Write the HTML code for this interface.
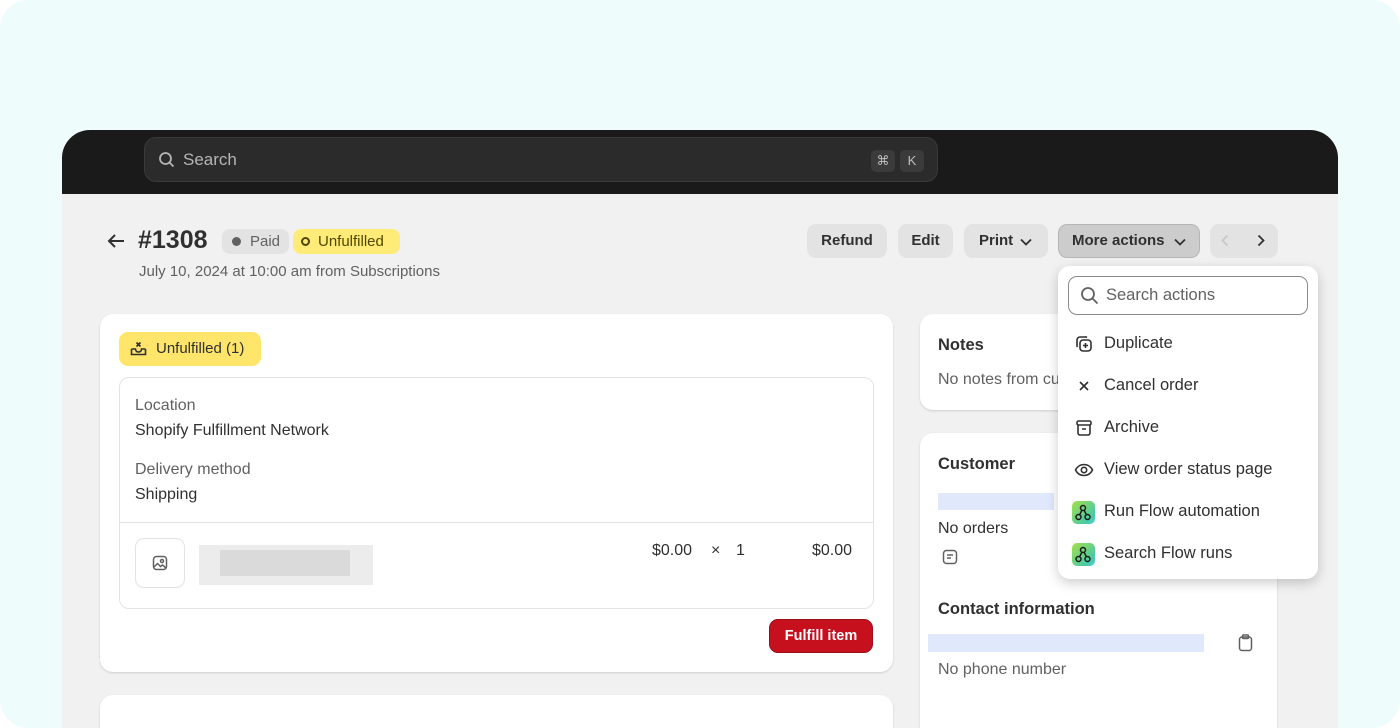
<!DOCTYPE html>
<html><head><meta charset="utf-8"><style>
*{box-sizing:border-box;margin:0;padding:0}
html,body{width:1400px;height:728px;overflow:hidden}
body{background:#fff;font-family:"Liberation Sans",sans-serif;color:#303030;position:relative}
.bg{left:0;top:0;width:1400px;height:728px;background:#eefcfb;border-radius:28px}
.a{position:absolute}
.frame{left:62px;top:130px;width:1276px;height:598px;background:#f1f1f1;border-radius:28px 28px 0 0;overflow:hidden}
.top{left:0;top:0;width:1276px;height:64px;background:#1a1a1a}
.search{left:82px;top:7px;width:794px;height:45px;background:#2b2b2b;border:1px solid #3a3a3a;border-radius:12px;color:#b5b5b5;font-size:17px}
.key{top:12px;width:24px;height:22px;background:#3b3b3b;border-radius:5px;color:#bdbdbd;font-size:13px;text-align:center;line-height:22px}
.btn{top:94px;height:34px;background:#e3e3e3;border-radius:9px;font-size:15px;font-weight:bold;color:#303030;line-height:34px;text-align:center}
.card{background:#fff;border-radius:13px;box-shadow:0 1px 2px rgba(0,0,0,.15)}
.t15{font-size:16px}
.lbl{color:#616161;font-size:16px}
.bold{font-weight:bold;font-size:16.5px}
.menu{left:996px;top:136px;width:260px;height:313px;background:#fff;border-radius:12px;box-shadow:0 4px 12px rgba(0,0,0,.2)}
.mi{left:46px;font-size:16.5px;color:#303030}
.ic{left:16px;width:20px;height:20px}
.flow{left:14px;width:23px;height:23px;border-radius:5px;background:linear-gradient(135deg,#a5e04a,#44c9a8 80%,#5bd6e8)}
.blur{background:#dfe9fb}
</style></head><body>
<div class="a bg"></div>
<div class="a frame">
 <div class="a top">
  <div class="a search">
   <svg class="a" style="left:13px;top:13px" width="18" height="18" viewBox="0 0 18 18" fill="none" stroke="#b5b5b5" stroke-width="1.8"><circle cx="7.5" cy="7.5" r="5.5"/><path d="M11.5 11.5l4 4"/></svg>
   <div class="a" style="left:38px;top:12px">Search</div>
   <div class="a key" style="left:726px">⌘</div><div class="a key" style="left:755px">K</div>
  </div>
 </div>
 <svg class="a" style="left:44px;top:102px" width="20" height="18" viewBox="0 0 20 18" fill="none" stroke="#303030" stroke-width="2"><path d="M18 9H3M9 3L3 9l6 6"/></svg>
 <div class="a" style="left:76px;top:96px;font-size:25px;font-weight:bold">#1308</div>
 <div class="a" style="left:160px;top:99px;width:67px;height:25px;background:#e3e3e3;border-radius:8px;font-size:15px;color:#616161;line-height:25px;padding-left:28px">Paid</div>
 <div class="a" style="left:170px;top:107px;width:9px;height:9px;border-radius:50%;background:#616161"></div>
 <div class="a" style="left:231px;top:99px;width:107px;height:25px;background:#ffeb78;border-radius:8px;font-size:15px;color:#4f4700;line-height:25px;padding-left:25px">Unfulfilled</div>
 <div class="a" style="left:239px;top:107px;width:9px;height:9px;border-radius:50%;border:2px solid #4f4700"></div>
 <div class="a" style="left:77px;top:133px;font-size:15px;color:#616161">July 10, 2024 at 10:00 am from Subscriptions</div>
 <div class="a btn" style="left:745px;width:80px">Refund</div>
 <div class="a btn" style="left:836px;width:55px">Edit</div>
 <div class="a btn" style="left:902px;width:84px;text-align:left;padding-left:15px">Print</div>
 <svg class="a" style="left:958px;top:108px" width="12" height="8" viewBox="0 0 12 8" fill="none" stroke="#303030" stroke-width="1.8"><path d="M1 1.5l5 5 5-5"/></svg>
 <div class="a btn" style="left:996px;width:142px;background:#cccccc;border:1px solid #b5b5b5;text-align:left;padding-left:13px;line-height:32px">More actions</div>
 <svg class="a" style="left:1112px;top:108px" width="12" height="8" viewBox="0 0 12 8" fill="none" stroke="#303030" stroke-width="1.8"><path d="M1 1.5l5 5 5-5"/></svg>
 <div class="a btn" style="left:1148px;width:68px"></div>
 <svg class="a" style="left:1159px;top:104px" width="8" height="13" viewBox="0 0 8 13" fill="none" stroke="#c8c8c8" stroke-width="1.8"><path d="M6.5 1.5l-5 5 5 5"/></svg>
 <svg class="a" style="left:1195px;top:104px" width="8" height="13" viewBox="0 0 8 13" fill="none" stroke="#303030" stroke-width="1.8"><path d="M1.5 1.5l5 5-5 5"/></svg>

 <div class="a card" style="left:38px;top:184px;width:793px;height:358px">
  <div class="a" style="left:19px;top:18px;width:142px;height:34px;background:#ffe56a;border-radius:9px;font-size:15px;color:#303030;line-height:34px;padding-left:37px">Unfulfilled (1)</div>
  <svg class="a" style="left:30px;top:27px" width="17" height="16" viewBox="0 0 17 16" fill="none" stroke="#303030" stroke-width="1.6"><path d="M1.5 8v5.5h14V8M1.5 8h4c0 2 1.3 3 3 3s3-1 3-3h4M6.5 1.5l4 4M10.5 1.5l-4 4"/></svg>
  <div class="a" style="left:19px;top:63px;width:755px;height:232px;border:1px solid #e3e3e3;border-radius:10px">
   <div class="a lbl" style="left:15px;top:19px">Location</div>
   <div class="a t15" style="left:15px;top:44px">Shopify Fulfillment Network</div>
   <div class="a lbl" style="left:15px;top:83px">Delivery method</div>
   <div class="a t15" style="left:15px;top:108px">Shipping</div>
   <div class="a" style="left:0;top:144px;width:753px;height:1px;background:#e3e3e3"></div>
   <div class="a" style="left:15px;top:160px;width:50px;height:50px;border:1px solid #e3e3e3;border-radius:9px"></div>
   <svg class="a" style="left:32px;top:177px" width="16" height="16" viewBox="0 0 16 16" fill="none" stroke="#616161" stroke-width="1.5"><rect x="1.5" y="1.5" width="13" height="13" rx="3"/><circle cx="10" cy="6" r="1.5"/><path d="M2 12l3.5-3.5 3 3 2-1.5 3.5 3"/></svg>
   <div class="a" style="left:79px;top:167px;width:174px;height:40px;background:#ececec"></div>
   <div class="a" style="left:100px;top:172px;width:130px;height:26px;background:#dadada"></div>
   <div class="a t15" style="left:532px;top:164px">$0.00</div>
   <div class="a t15" style="left:591px;top:164px">×</div>
   <div class="a t15" style="left:616px;top:164px">1</div>
   <div class="a t15" style="left:692px;top:164px">$0.00</div>
  </div>
  <div class="a" style="left:669px;top:305px;width:104px;height:34px;background:#c7101d;border:1px solid #9e0d18;border-radius:9px;color:#fff;font-weight:bold;font-size:14.5px;line-height:32px;text-align:center">Fulfill item</div>
 </div>
 <div class="a card" style="left:38px;top:565px;width:793px;height:33px;border-radius:13px 13px 0 0"></div>

 <div class="a card" style="left:858px;top:184px;width:357px;height:96px">
  <div class="a bold" style="left:18px;top:22px">Notes</div>
  <div class="a lbl" style="left:18px;top:57px">No notes from customer</div>
 </div>
 <div class="a card" style="left:858px;top:303px;width:357px;height:295px;border-radius:13px 13px 0 0">
  <div class="a bold" style="left:18px;top:22px">Customer</div>
  <div class="a blur" style="left:18px;top:60px;width:116px;height:17px"></div>
  <div class="a lbl" style="left:18px;top:87px;color:#303030">No orders</div>
  <svg class="a" style="left:22px;top:116px" width="16" height="17" viewBox="0 0 16 17" fill="none" stroke="#616161" stroke-width="1.5"><rect x="1.5" y="1.5" width="13" height="13" rx="3"/><path d="M5 6h6M5 9h4"/></svg>
  <div class="a bold" style="left:18px;top:167px">Contact information</div>
  <div class="a blur" style="left:8px;top:201px;width:276px;height:18px"></div>
  <div class="a lbl" style="left:18px;top:228px">No phone number</div>
  <svg class="a" style="left:318px;top:201px" width="15" height="18" viewBox="0 0 15 18" fill="none" stroke="#616161" stroke-width="1.5"><rect x="1.5" y="3" width="12" height="13.5" rx="2.5"/><rect x="4.5" y="1" width="6" height="3.5" rx="1"/></svg>
 </div>

 <div class="a menu">
  <div class="a" style="left:10px;top:10px;width:240px;height:39px;border:1px solid #8a8a8a;border-radius:9px"></div>
  <svg class="a" style="left:22px;top:20px" width="19" height="19" viewBox="0 0 19 19" fill="none" stroke="#616161" stroke-width="1.8"><circle cx="8" cy="8" r="6"/><path d="M12.5 12.5l5 5"/></svg>
  <div class="a" style="left:48px;top:20px;font-size:16.5px;color:#616161">Search actions</div>
  <svg class="a ic" style="top:68px" viewBox="0 0 20 20" fill="none" stroke="#303030" stroke-width="1.6"><rect x="6" y="6" width="11" height="11" rx="3"/><path d="M13 3.5A2.5 2.5 0 0 0 11 3H6a3 3 0 0 0-3 3v5a2.5 2.5 0 0 0 .5 2M11.5 9v5M9 11.5h5"/></svg>
  <div class="a mi" style="top:68px">Duplicate</div>
  <svg class="a ic" style="top:110px" viewBox="0 0 20 20" fill="none" stroke="#303030" stroke-width="1.6"><path d="M6 6l8 8M14 6l-8 8"/></svg>
  <div class="a mi" style="top:110px">Cancel order</div>
  <svg class="a ic" style="top:152px" viewBox="0 0 20 20" fill="none" stroke="#303030" stroke-width="1.6"><rect x="3" y="3" width="14" height="4" rx="1.5"/><path d="M4 7v8a2 2 0 0 0 2 2h8a2 2 0 0 0 2-2V7M8 11h4"/></svg>
  <div class="a mi" style="top:152px">Archive</div>
  <svg class="a ic" style="top:194px" viewBox="0 0 20 20" fill="none" stroke="#303030" stroke-width="1.6"><path d="M1.5 10C3.5 6 6.5 4.5 10 4.5S16.5 6 18.5 10C16.5 14 13.5 15.5 10 15.5S3.5 14 1.5 10z"/><circle cx="10" cy="10" r="2.7"/></svg>
  <div class="a mi" style="top:194px">View order status page</div>
  <div class="a flow" style="top:235px"></div>
  <svg class="a" style="left:16px;top:238px" width="19" height="18" viewBox="0 0 19 18" fill="none" stroke="#1a1a1a" stroke-width="1.5"><circle cx="9" cy="4" r="2.5"/><circle cx="4.5" cy="13" r="2.5"/><circle cx="13.5" cy="13" r="2.5"/><path d="M7.8 6.3L5.7 10.7M10.2 6.3l2.1 4.4"/></svg>
  <div class="a mi" style="top:236px">Run Flow automation</div>
  <div class="a flow" style="top:277px"></div>
  <svg class="a" style="left:16px;top:280px" width="19" height="18" viewBox="0 0 19 18" fill="none" stroke="#1a1a1a" stroke-width="1.5"><circle cx="9" cy="4" r="2.5"/><circle cx="4.5" cy="13" r="2.5"/><circle cx="13.5" cy="13" r="2.5"/><path d="M7.8 6.3L5.7 10.7M10.2 6.3l2.1 4.4"/></svg>
  <div class="a mi" style="top:278px">Search Flow runs</div>
 </div>
</div>
</body></html>
